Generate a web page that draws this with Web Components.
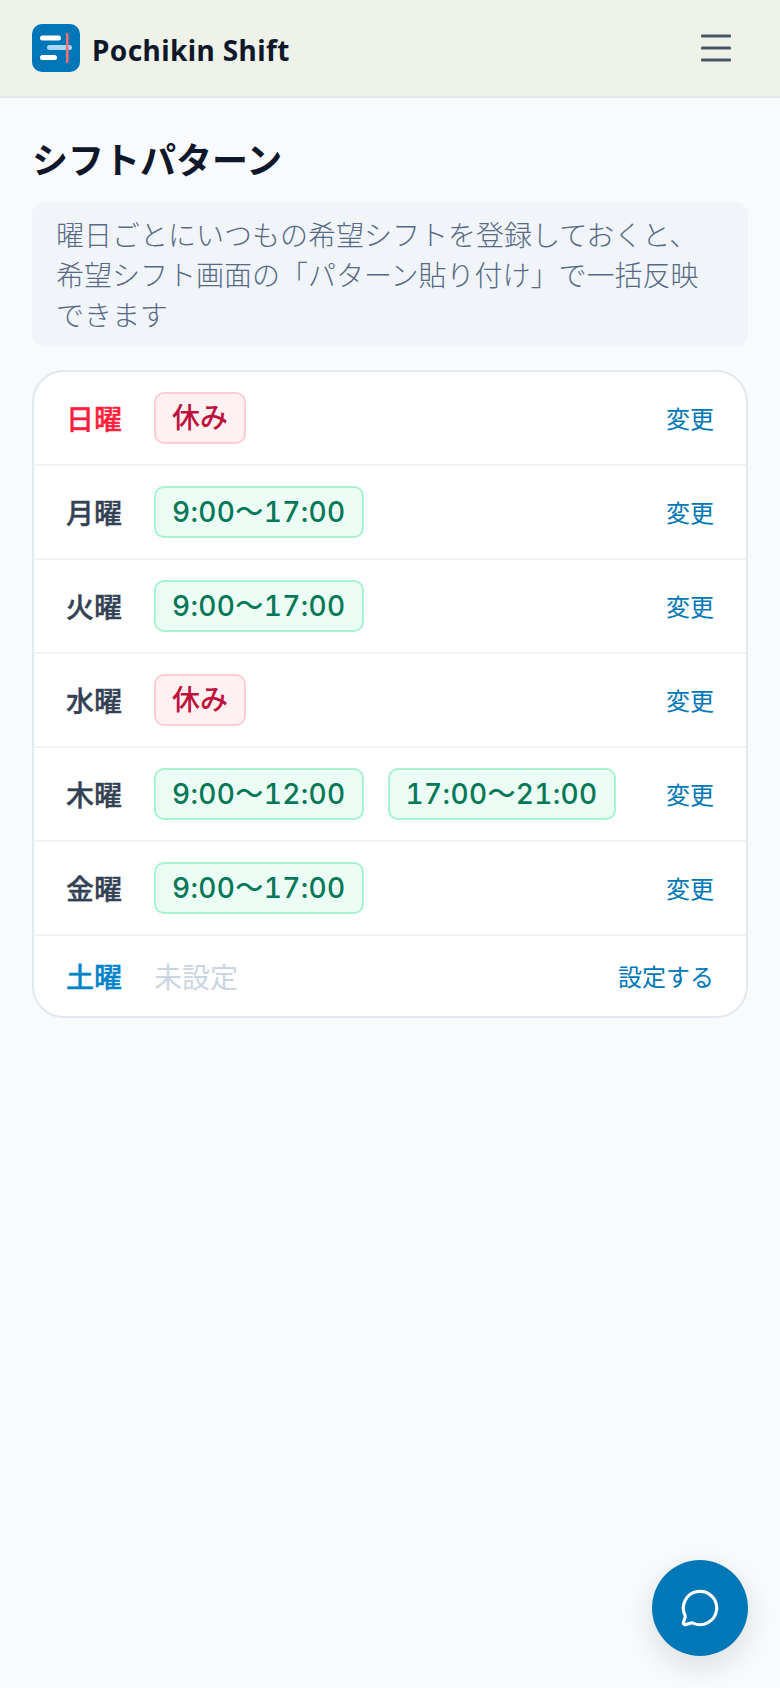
<!DOCTYPE html>
<html lang="ja"><head><meta charset="utf-8"><title>シフトパターン</title>
<style>
html,body{margin:0;padding:0;background:#f8fafc}
body{font-family:"Noto Sans","Noto Sans CJK JP",sans-serif;min-height:1688px}
</style></head><body>
<app-header></app-header>
<page-main>
  <h-title>シフトパターン</h-title>
  <info-note>曜日ごとにいつもの希望シフトを登録しておくと、<br>希望シフト画面の「パターン貼り付け」で一括反映<br>できます</info-note>
  <pattern-card>
    <day-row day="日曜" tone="sun"><shift-pill kind="off">休み</shift-pill></day-row>
    <day-row day="月曜"><shift-pill>9:00〜17:00</shift-pill></day-row>
    <day-row day="火曜"><shift-pill>9:00〜17:00</shift-pill></day-row>
    <day-row day="水曜"><shift-pill kind="off">休み</shift-pill></day-row>
    <day-row day="木曜"><shift-pill>9:00〜12:00</shift-pill><shift-pill>17:00〜21:00</shift-pill></day-row>
    <day-row day="金曜"><shift-pill>9:00〜17:00</shift-pill></day-row>
    <day-row day="土曜" tone="sat" action="設定する" last><span style="color:#cbd5e1;font-size:28px">未設定</span></day-row>
  </pattern-card>
</page-main>
<chat-fab></chat-fab>
<script>
function def(name,html,init){customElements.define(name,class extends HTMLElement{constructor(){super();this.attachShadow({mode:'open'}).innerHTML=typeof html==='function'?html(this):html}connectedCallback(){init&&init(this)}})}
def('app-header',`<style>:host{display:flex;align-items:center;justify-content:space-between;box-sizing:border-box;height:98px;padding:0 32px;background:#eef2e8;border-bottom:2px solid #e2e8f0}
.brand{display:flex;align-items:center;gap:12px;font-family:"Noto Sans",sans-serif;font-weight:700;font-size:28px;letter-spacing:.4px;color:#0f172a}
.brand span{position:relative;top:2px}
svg{display:block}button{all:unset;display:block;padding:0 17px 0 0}</style>
<div class="brand"><svg width="48" height="48" viewBox="0 0 48 48"><rect width="48" height="48" rx="10" fill="#0077b6"/><rect x="8" y="11.5" width="21" height="5" rx="2.5" fill="#fff"/><rect x="15" y="21" width="25" height="5" rx="2.5" fill="#a9d6f5"/><rect x="8" y="31" width="17" height="5" rx="2.5" fill="#fff"/><rect x="34" y="9" width="2.5" height="30" rx="1" fill="#f87171"/></svg><span>Pochikin Shift</span></div>
<button aria-label="メニュー"><svg width="30" height="28" viewBox="0 0 30 28"><path d="M1.5 2h27M1.5 14h27M1.5 26h27" stroke="#475569" stroke-width="3.2" stroke-linecap="round"/></svg></button>`);
def('page-main',`<style>:host{display:block;padding:32px 32px 0}</style><slot></slot>`);
def('h-title',`<style>:host{display:block;font-size:36px;line-height:56px;font-weight:700;color:#0f172a;margin-bottom:16px;font-family:"Noto Sans CJK JP",sans-serif}</style><slot></slot>`);
def('info-note',`<style>:host{display:block;background:#f1f5f9;border-radius:12px;padding:12px 24px;font-size:28px;line-height:40px;font-weight:300;color:#566a86;margin-bottom:24px;font-family:"Noto Sans CJK JP",sans-serif;white-space:nowrap}</style><slot></slot>`);
def('pattern-card',`<style>:host{display:block;background:#fff;border:2px solid #e2e8f0;border-radius:32px;overflow:hidden}</style><slot></slot>`);
def('day-row',el=>{const c={sun:'#ff1f3d',sat:'#0284c7'}[el.getAttribute('tone')]||'#334155';const last=el.hasAttribute('last');return `<style>:host{display:flex;align-items:center;box-sizing:border-box;padding:20px 32px;${last?'':'border-bottom:2px solid #f1f5f9;'}font-family:"Noto Sans CJK JP",sans-serif;line-height:40px}
.d{flex:0 0 64px;margin-right:24px;font-size:28px;font-weight:500;-webkit-text-stroke:.35px ${c};color:${c}}.s{flex:1;display:flex;gap:24px;align-items:center}.a{font-size:24px;color:#0077b6;white-space:nowrap}</style>
<span class="d">${el.getAttribute('day')}</span><div class="s"><slot></slot></div><span class="a">${el.getAttribute('action')||'変更'}</span>`});
def('shift-pill',el=>{const off=el.getAttribute('kind')==='off';return `<style>:host{display:block;box-sizing:border-box;height:52px;line-height:48px;padding:0 16px;border-radius:10px;border:2px solid ${off?'#fecdd3':'#a7f3d0'};background:${off?'#fff1f2':'#ecfdf5'};color:${off?'#be123c':'#047857'};font-size:28px;font-weight:500;white-space:nowrap;font-family:Inter,"Noto Sans CJK JP",sans-serif;font-feature-settings:"calt" 0,"tnum" 1;letter-spacing:${off?0:.35}px}</style><slot></slot>`});
def('chat-fab',`<style>:host{position:fixed;right:32px;bottom:32px;width:96px;height:96px;border-radius:50%;background:#0077b6;display:flex;align-items:center;justify-content:center;box-shadow:0 10px 30px rgba(15,23,42,.12)}</style>
<svg width="40" height="40" viewBox="0 0 24 24" fill="none" stroke="#fff" stroke-width="1.9" stroke-linecap="round" stroke-linejoin="round"><path d="M2.992 16.342a2 2 0 0 1 .094 1.167l-1.065 3.29a1 1 0 0 0 1.236 1.168l3.413-.998a2 2 0 0 1 1.099.092 10 10 0 1 0-4.777-4.719"/></svg>`);
</script>
</body></html>
